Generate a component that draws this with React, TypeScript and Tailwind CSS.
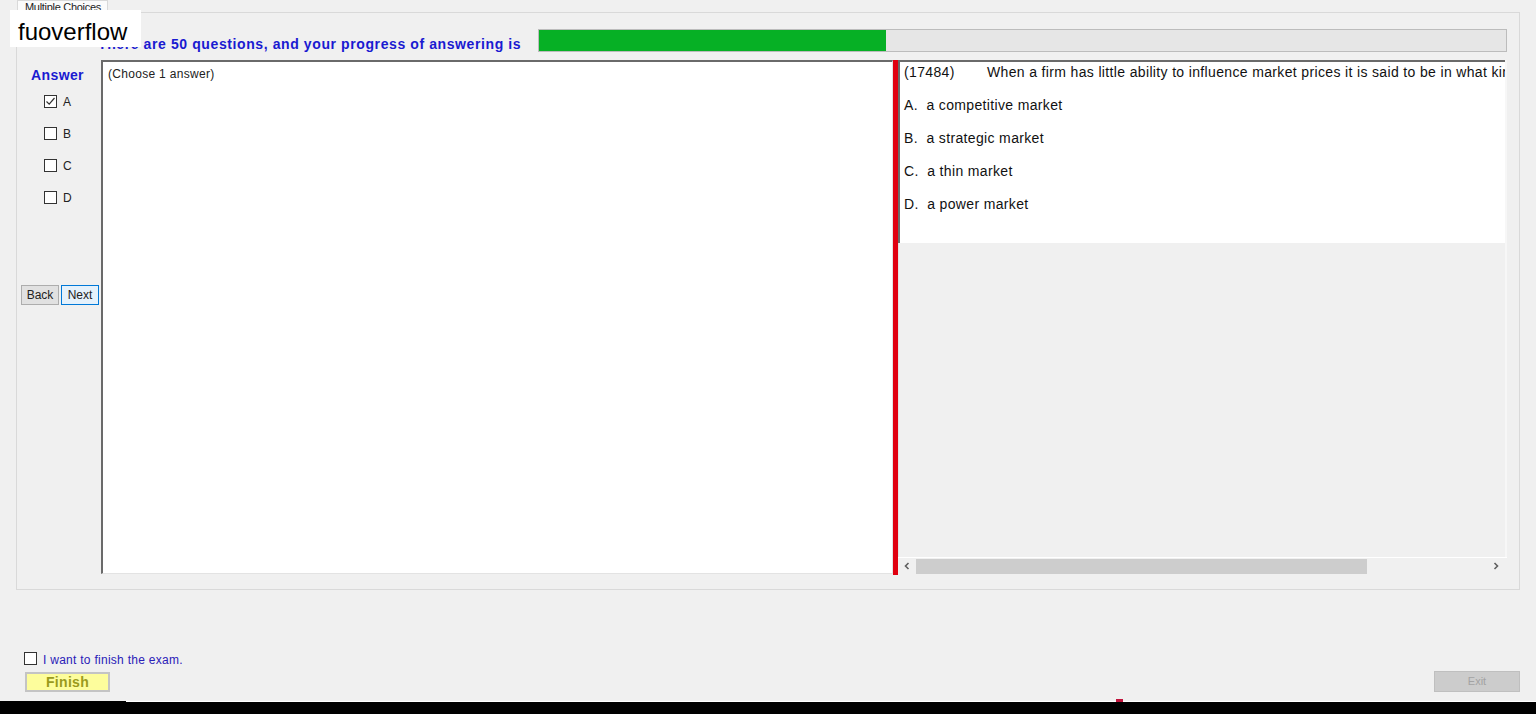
import React from 'react';

const options = [
  { key: 'A', text: 'a competitive market' },
  { key: 'B', text: 'a strategic market' },
  { key: 'C', text: 'a thin market' },
  { key: 'D', text: 'a power market' },
];

function CheckBox({ checked = false }: { checked?: boolean }) {
  return (
    <span className="flex h-[13px] w-[13px] flex-shrink-0 items-center justify-center border border-[#333333] bg-white">
      {checked && (
        <svg width="11" height="11" viewBox="0 0 11 11" fill="none">
          <path d="M1.5 5.5 L4.2 8.2 L9.5 2" stroke="#333333" strokeWidth="1.2" />
        </svg>
      )}
    </span>
  );
}

export default function App() {
  return (
    <div className="relative flex h-[714px] w-[1536px] flex-col overflow-hidden bg-[#f0f0f0] font-['Liberation_Sans',Arial,sans-serif] text-black">
      {/* Tab control */}
      <div className="ml-[16px] flex w-[1504px] flex-col">
        <div className="ml-px h-[12px] w-[91px] overflow-hidden whitespace-nowrap border border-b-0 border-[#d9d9d9] bg-[#fbfbfb] pl-[7px] text-[11px] leading-[12px] tracking-[-0.3px] text-[#222]">
          Multiple Choices
        </div>
        <div className="flex h-[578px] flex-col border border-[#d9d9d9] bg-[#f0f0f0]">
          {/* Progress header */}
          <div className="mt-[16px] flex h-[23px] items-center pl-[81px]">
            <span className="w-[440px] whitespace-nowrap pt-[7px] text-[14px] font-bold tracking-[0.6px] text-[#1a1ad1]">
              There are 50 questions, and your progress of answering is
            </span>
            <div className="h-[23px] w-[969px] border border-[#bcbcbc] bg-[#e6e6e6]">
              <div className="h-full w-[347px] bg-[#06b025]" />
            </div>
          </div>

          {/* Body */}
          <div className="mt-[8px] flex h-[515px]">
            {/* Answer column */}
            <div className="flex w-[84px] flex-col">
              <div className="mt-[7px] pl-[14px] text-[14px] font-bold leading-[16px] tracking-[0.4px] text-[#1a1ad1]">Answer</div>
              <div className="mt-[12px] flex flex-col gap-[19px] pl-[27px]">
                {options.map((o, i) => (
                  <label key={o.key} className="flex h-[13px] items-center gap-[6px] text-[12px] text-[#222]">
                    <CheckBox checked={i === 0} />
                    {o.key}
                  </label>
                ))}
              </div>
              <div className="mt-[81px] flex gap-[2px] pl-[4px]">
                <button className="h-[20px] w-[38px] border border-[#adadad] bg-[#e1e1e1] text-[12px] text-[#222]">Back</button>
                <button className="h-[20px] w-[38px] border border-[#0078d7] bg-[#e5f1fb] text-[12px] text-[#222]">Next</button>
              </div>
            </div>

            {/* Answer text box */}
            <div className="h-[514px] w-[792px] border border-l-2 border-t-2 border-b-[#e3e3e3] border-l-[#6a6a6a] border-r-[#e3e3e3] border-t-[#6a6a6a] bg-white px-[5px] pt-[5px] text-[12px] leading-[14px] tracking-[0.3px] text-[#222]">
              (Choose 1 answer)
            </div>

            {/* Splitter */}
            <div className="w-[5px] bg-[#e00010]" />

            {/* Question panel */}
            <div className="flex w-[609px] flex-col">
              <div className="flex h-[497px] flex-col border-r-2 border-[#f7f7f7]">
                <div className="h-[183px] overflow-hidden border-l-2 border-t-2 border-[#6a6a6a] bg-white pl-[4px] pt-[2px] text-[14px] leading-[16px] tracking-[0.35px] text-[#111]">
                  <div className="whitespace-nowrap">
                    <span className="inline-block w-[83px]">(17484)</span>
                    When a firm has little ability to influence market prices it is said to be in what kind of market?
                  </div>
                  <div className="mt-[17px] flex flex-col gap-[17px]">
                    {options.map((o) => (
                      <div key={o.key} className="whitespace-pre">
                        {o.key}.  {o.text}
                      </div>
                    ))}
                  </div>
                </div>
                <div className="flex-1 border-l border-[#e2e2e2]" />
              </div>
              {/* Horizontal scrollbar */}
              <div className="flex h-[17px] items-center border-t border-white bg-[#f0f0f0] pr-[2px]">
                <span className="flex h-[15px] w-[18px] items-center justify-center">
                  <svg width="8" height="8" viewBox="0 0 8 8" fill="none">
                    <path d="M5.5 1 L2.5 4 L5.5 7" stroke="#606060" strokeWidth="1.6" />
                  </svg>
                </span>
                <div className="h-[15px] w-[451px] bg-[#cdcdcd]" />
                <div className="flex-1" />
                <span className="flex h-[15px] w-[18px] items-center justify-center">
                  <svg width="8" height="8" viewBox="0 0 8 8" fill="none">
                    <path d="M2.5 1 L5.5 4 L2.5 7" stroke="#606060" strokeWidth="1.6" />
                  </svg>
                </span>
              </div>
            </div>
          </div>
        </div>
      </div>

      {/* Bottom area */}
      <div className="flex flex-1 flex-col">
        <label className="mt-[62px] flex h-[13px] items-center gap-[6px] pl-[24px] text-[12px] tracking-[0.27px] text-[#2b20b8]">
          <CheckBox />
          <span className="pt-[2px]">I want to finish the exam.</span>
        </label>
        <div className="mt-[6px] flex items-start justify-between">
          <button className="ml-[25px] mt-px h-[20px] w-[85px] border-2 border-[#c4c4c4] bg-[#fdfd9c] text-[14px] font-bold leading-[14px] tracking-[0.3px] text-[#9a9a1c]">
            Finish
          </button>
          <button className="mr-[16px] h-[21px] w-[86px] border border-[#bfbfbf] bg-[#cccccc] text-[11px] text-[#a3a3a3]">
            Exit
          </button>
        </div>
      </div>

      {/* Taskbar strip */}
      <div className="relative h-[13px] bg-black">
        <div className="ml-[126px] h-px bg-white" />
        <div className="absolute left-[1116px] top-[-2px] h-[3px] w-[7px] bg-[#c0143c]" />
      </div>

      {/* Watermark */}
      <div className="absolute left-[10px] top-[10px] flex h-[37px] w-[131px] items-center bg-white pl-[8px] pt-[6px] text-[24px] leading-[24px] text-black">
        fuoverflow
      </div>
    </div>
  );
}
